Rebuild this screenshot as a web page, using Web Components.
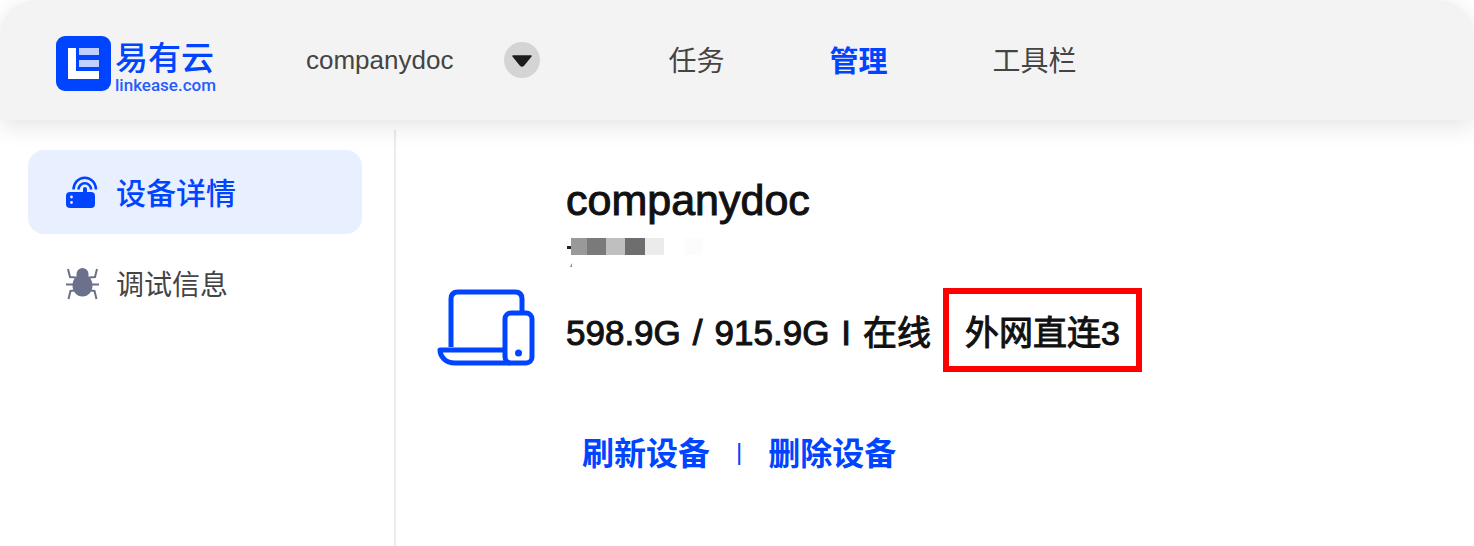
<!DOCTYPE html>
<html lang="zh-CN">
<head>
<meta charset="utf-8">
<meta name="viewport" content="width=device-width, initial-scale=1">
<title>易有云</title>
<style>
  body {
    margin: 0;
    background: #fff;
    color: #444;
    font-family: "Liberation Sans", "Noto Sans CJK SC", sans-serif;
    --brand: #0044ff;
    --bar: #f3f3f3;
  }
</style>
</head>
<body>
<le-app>
  <le-header slot="header">
    <le-logo slot="logo"></le-logo>
    <le-device-picker slot="device">companydoc</le-device-picker>
    <le-nav-link>任务</le-nav-link>
    <le-nav-link active>管理</le-nav-link>
    <le-nav-link>工具栏</le-nav-link>
  </le-header>
  <le-side-item slot="side" active icon="router">设备详情</le-side-item>
  <le-side-item slot="side" icon="bug">调试信息</le-side-item>
  <le-device>
    <span slot="name">companydoc</span>
    <span slot="used">598.9G</span>
    <span slot="total">915.9G</span>
    <span slot="state">在线</span>
    <span slot="link">外网直连3</span>
  </le-device>
</le-app>

<script>
  function define(name, html) {
    customElements.define(name, class extends HTMLElement {
      constructor() {
        super();
        this.attachShadow({ mode: 'open' }).innerHTML = html;
      }
    });
  }

  define('le-app', `
    <style>
      :host { display: flex; flex-direction: column; min-height: 100vh; }
      .body { display: flex; flex: 1; margin-top: 10px; }
      aside { box-sizing: border-box; width: 396px; flex: none; border-right: 2px solid #ebebeb; padding: 20px 32px 20px 28px; }
      nav { display: flex; flex-direction: column; gap: 8px; }
      main { flex: 1; min-width: 0; padding: 40px 40px 48px; }
    </style>
    <slot name="header"></slot>
    <div class="body">
      <aside><nav><slot name="side"></slot></nav></aside>
      <main><slot></slot></main>
    </div>`);

  define('le-header', `
    <style>
      :host { display: block; }
      header { display: flex; align-items: center; height: 120px; padding: 0 56px; background: var(--bar); border-radius: 36px 36px 0 0; box-shadow: 0 6px 24px rgba(0, 0, 0, .11); clip-path: inset(0 0 -40px 0); }
      .device { margin-left: 90px; }
      nav { display: flex; gap: 105px; margin-left: 128px; }
    </style>
    <header>
      <slot name="logo"></slot>
      <div class="device"><slot name="device"></slot></div>
      <nav><slot></slot></nav>
    </header>`);

  define('le-logo', `
    <style>
      :host { display: block; }
      a { display: flex; gap: 4px; align-items: flex-start; width: 160px; padding-top: 11px; color: var(--brand); text-decoration: none; }
      svg { flex: none; }
      .words { display: flex; flex-direction: column; padding-top: 7px; }
      .zh { font: 500 33px/32px "Liberation Sans", "Noto Sans CJK SC", sans-serif; }
      .en { font: 500 17px/20px Roboto, sans-serif; opacity: .85; }
    </style>
    <a href="#">
      <svg width="55" height="55" viewBox="0 0 55 55" aria-hidden="true">
        <rect width="55" height="55" rx="9" fill="#0044ff"/>
        <path d="M12 12h8v23h23v8H12z" fill="#fff"/>
        <path d="M23 12h20v7H23zM23 24h20v7H23z" fill="#bfd0ff"/>
      </svg>
      <span class="words"><span class="zh">易有云</span><span class="en">linkease.com</span></span>
    </a>`);

  define('le-device-picker', `
    <style>
      :host { display: block; }
      .row { display: flex; align-items: center; gap: 51px; font-size: 26px; line-height: 36px; }
      button { display: grid; place-items: center; width: 36px; height: 36px; padding: 0; border: 0; border-radius: 50%; background: #d4d4d4; }
    </style>
    <div class="row">
      <span><slot></slot></span>
      <button aria-label="切换设备">
        <svg width="22" height="14" viewBox="0 0 22 14" aria-hidden="true"><path d="M2 3h18L12.500 12.200q-1.500 1.400-3 0z" fill="#1c1c1c" stroke="#1c1c1c" stroke-width="1.500" stroke-linejoin="round"/></svg>
      </button>
    </div>`);

  define('le-nav-link', `
    <style>
      :host { display: block; }
      a { display: block; padding-bottom: 2px; color: #444; text-decoration: none; font: 28px/40px "Noto Sans CJK SC", sans-serif; }
      :host([active]) a { color: var(--brand); font-size: 29px; font-weight: 700; }
    </style>
    <a href="#"><slot></slot></a>`);

  const icons = {
    router: `<svg width="34" height="34" viewBox="0 0 34 34" fill="none">
      <rect x="1" y="17" width="29" height="16" rx="4" fill="#0044ff"/>
      <path d="M8.500 14.500a11 11.500 0 0 1 22.500 0M13.500 14.500a6.300 6.300 0 0 1 12.600 0" stroke="#0044ff" stroke-width="2.500"/>
      <path d="M20 18v-4" stroke="#0044ff" stroke-width="4" stroke-linecap="round"/>
      <circle cx="6.500" cy="22" r="1.400" fill="#e8efff"/><circle cx="6.500" cy="27.500" r="1.400" fill="#e8efff"/>
    </svg>`,
    bug: `<svg width="34" height="34" viewBox="0 0 34 34" fill="none">
      <path d="M11.500 9.500V7a6 6 0 0 1 12 0v2.500c2.500 2 4 5 4 9 0 6-4 11-10 11s-10-5-10-11c0-4 1.500-7 4-9z" fill="#6b708b"/>
      <path d="M3 2l2 8 6 .500M32 2l-2 8-6 .500M1 17.500h7M34 17.500h-7M3.500 32l2-8 4-.500M31.500 32l-2-8-4-.500" stroke="#6b708b" stroke-width="2"/>
    </svg>`
  };

  customElements.define('le-side-item', class extends HTMLElement {
    constructor() {
      super();
      this.attachShadow({ mode: 'open' }).innerHTML = `
        <style>
          :host { display: block; }
          a { display: flex; align-items: center; gap: 17px; height: 84px; padding-left: 37px; border-radius: 16px; color: #444; text-decoration: none; font: 28px/40px "Noto Sans CJK SC", sans-serif; }
          .icon { display: flex; }
          .label { padding-bottom: 2px; }
          :host([active]) a { background: #e8efff; color: var(--brand); font-size: 30px; font-weight: 500; }
        </style>
        <a href="#"><span class="icon" aria-hidden="true">${icons[this.getAttribute('icon')] || ''}</span><span class="label"><slot></slot></span></a>`;
    }
  });

  define('le-device', `
    <style>
      :host { display: flex; align-items: center; gap: 31px; color: #111; }
      .pic { flex: none; margin-top: 10px; }
      .info { display: flex; flex-direction: column; align-items: flex-start; }
      h1 { margin: 0; font-size: 43px; line-height: 60px; font-weight: 400; -webkit-text-stroke: 1px; }
      .mask { display: block; margin-top: 8px; }
      .status { display: flex; align-items: baseline; gap: 12px; margin-top: 18px; font-size: 35px; line-height: 48px; -webkit-text-stroke: 1px; white-space: nowrap; }
      .zh { font-size: 34px; }
      .link { border: 6px solid #f00; padding: 15px 16px 9px; }
      .actions { display: flex; align-items: center; gap: 26px; margin: 55px 0 0 16px; color: var(--brand); font-size: 24px; }
      .actions span { padding-top: 2px; }
      button { padding: 0; border: 0; background: none; color: inherit; font: 700 32px/48px "Noto Sans CJK SC", sans-serif; }
    </style>
    <svg class="pic" width="99" height="78" viewBox="-1 0 99 78" fill="none" stroke="#0044ff" stroke-width="5" aria-hidden="true">
      <path d="M14 58V10q0-7 7-7h57q7 0 7 7v14"/>
      <path d="M68 61H3q0 5 4 9t11 4h55" stroke-linejoin="round"/>
      <rect x="68" y="24" width="27" height="50" rx="6"/>
      <circle cx="81.500" cy="64" r="3.500" fill="#0044ff" stroke="none"/>
    </svg>
    <div class="info">
      <h1><slot name="name"></slot></h1>
      <svg class="mask" width="140" height="32" viewBox="-1 0 140 32" aria-hidden="true">
        <path d="M0 8h5v3H0z" fill="#222"/><path d="M3 29l2-4v4z" fill="#888"/>
        <path d="M4 0h16v17H4z" fill="#999"/><path d="M20 0h19v17H20z" fill="#7a7a7a"/>
        <path d="M39 0h19v17H39z" fill="#bfbfbf"/><path d="M58 0h20v17H58z" fill="#6e6e6e"/>
        <path d="M78 0h19v17H78z" fill="#ebebeb"/><path d="M117 0h19v17H117z" fill="#fcfcfc"/>
      </svg>
      <div class="status">
        <slot name="used"></slot><span>/</span><slot name="total"></slot><span>I</span><span class="zh"><slot name="state"></slot></span>
        <span class="zh link"><slot name="link"></slot></span>
      </div>
      <div class="actions"><button>刷新设备</button><span>|</span><button>删除设备</button></div>
    </div>`);
</script>
</body>
</html>
